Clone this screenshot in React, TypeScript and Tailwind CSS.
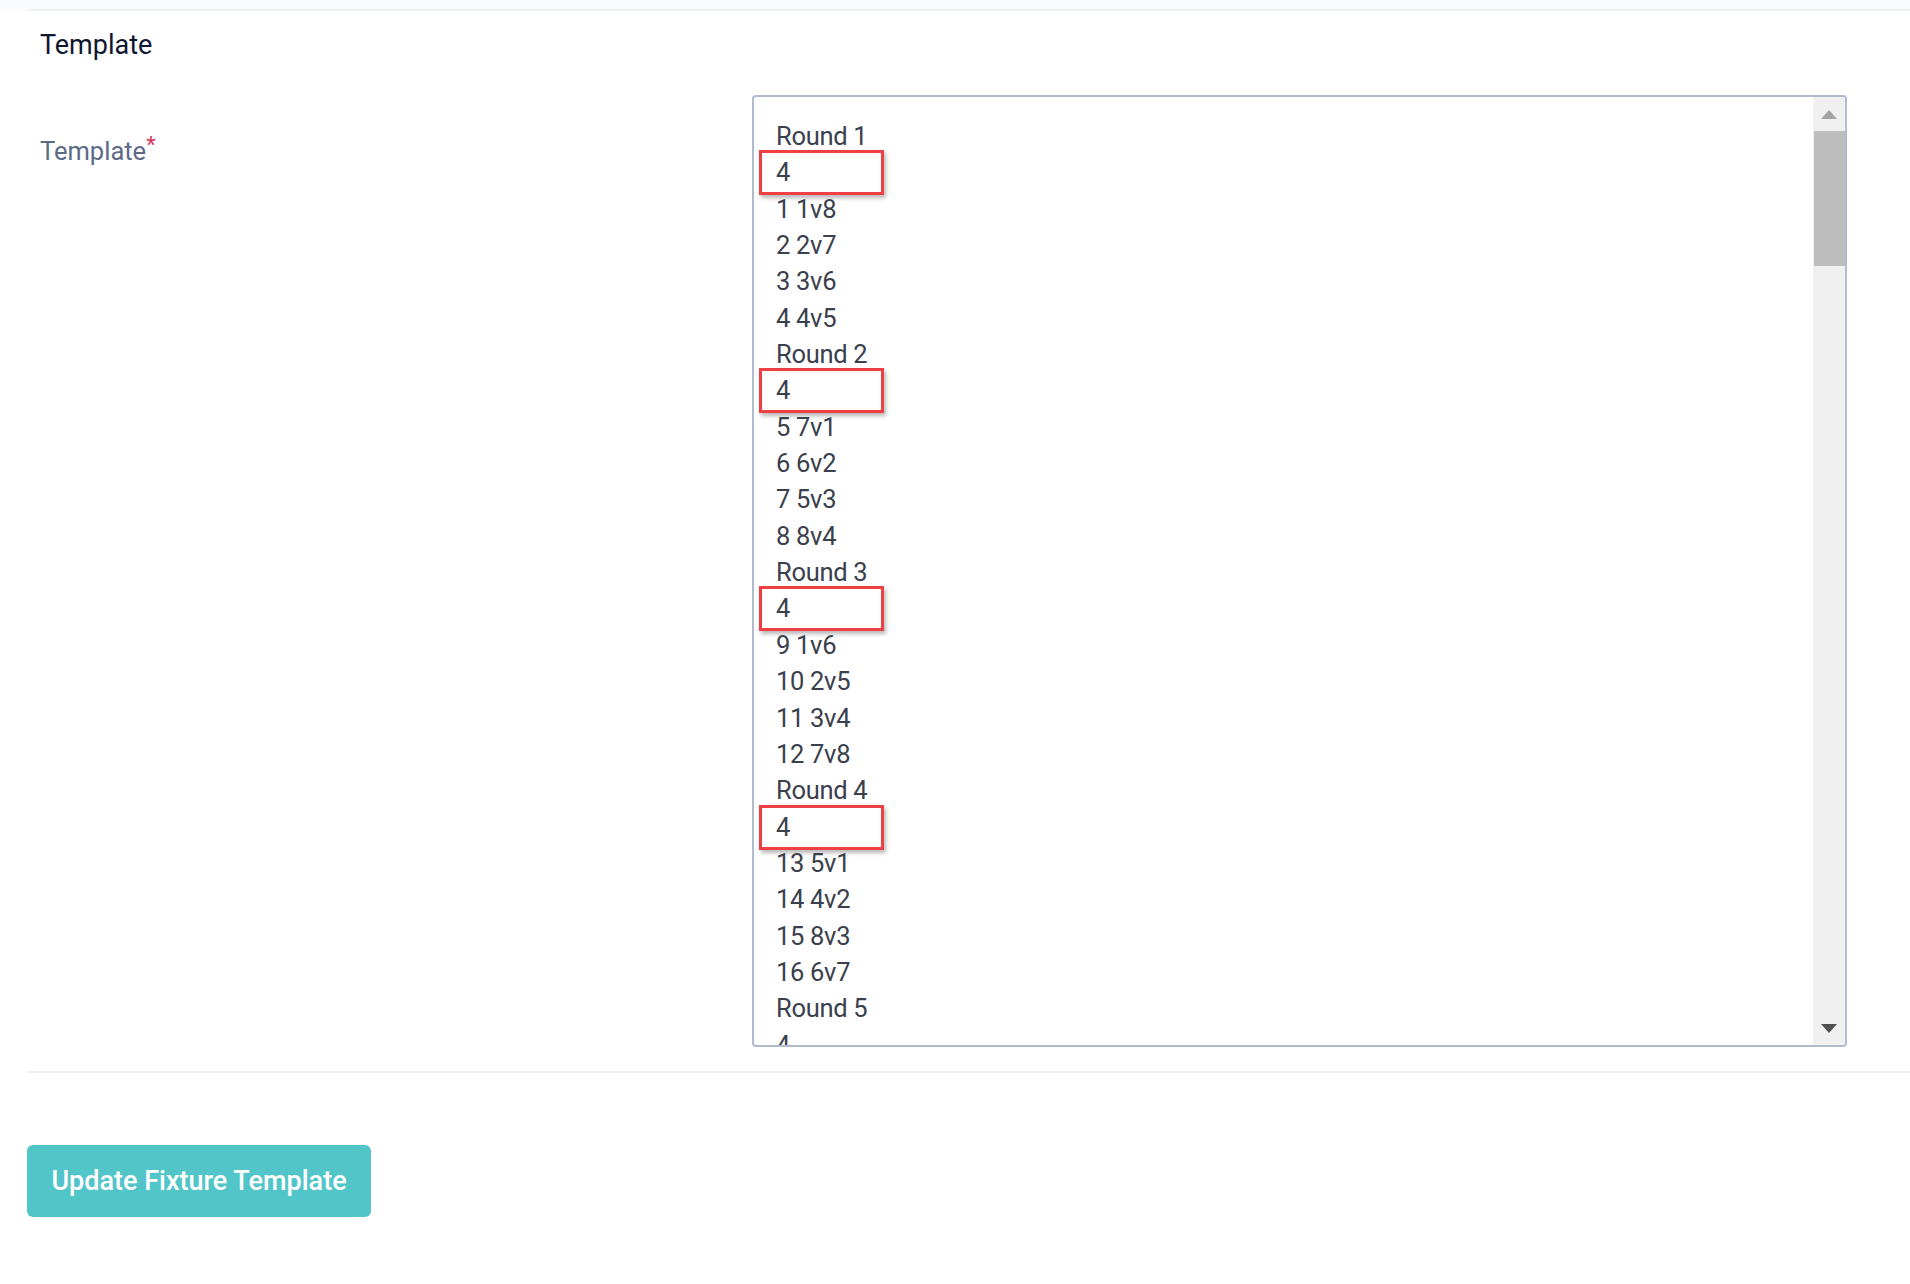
import React from 'react'

const rows: string[] = [
  'Round 1', '4', '1 1v8', '2 2v7', '3 3v6', '4 4v5',
  'Round 2', '4', '5 7v1', '6 6v2', '7 5v3', '8 8v4',
  'Round 3', '4', '9 1v6', '10 2v5', '11 3v4', '12 7v8',
  'Round 4', '4', '13 5v1', '14 4v2', '15 8v3', '16 6v7',
  'Round 5', '4',
]

// rows that carry the red highlight box
const marked = [1, 7, 13, 19]

function Row({ text, mark }: { text: string; mark: boolean }) {
  return (
    <div className="relative h-[36.35px] leading-[36.35px] whitespace-nowrap">
      {text}
      {mark && (
        <span className="absolute -left-[17px] -top-[4px] w-[125px] h-[45px] border-[3px] border-[#ee3f42] shadow-[2px_3px_4px_rgba(0,0,0,0.28)]" />
      )}
    </div>
  )
}

export default function App() {
  return (
    <div className="min-h-screen bg-white font-['Roboto',sans-serif]">
      <div className="h-[9px] bg-[#fafbfc]" />
      <div className="ml-[27px] border-t-2 border-[#edf1f6]">
        <h2 className="mt-[18px] pl-[13px] text-[27px] leading-[32px] font-normal text-[#0e1630]">
          Template
        </h2>

        <div className="mt-[34px] flex">
          <label className="w-[725px] pl-[13px] pt-[38px] text-[25.5px] leading-[36px] text-[#5b6b86]">
            Template
            <span className="relative -top-[8px] text-[22px] text-[#d6365c]">*</span>
          </label>

          <div className="mr-[63px] flex h-[952px] flex-1 overflow-hidden rounded-[4px] border-2 border-[#b0bbce] bg-white">
            <div className="flex-1 overflow-hidden pl-[22px] pt-[21px] text-[25.5px] tracking-[-0.3px] text-[#3a404c]">
              {rows.map((r, i) => (
                <Row key={i} text={r} mark={marked.includes(i)} />
              ))}
            </div>

            <div className="flex w-[32px] flex-col bg-[#f0f0f0]">
              <div className="flex h-[34px] items-center justify-center">
                <svg width="16" height="9" viewBox="0 0 16 9">
                  <polygon points="8,0 16,9 0,9" fill="#a3a3a3" />
                </svg>
              </div>
              <div className="ml-[1px] h-[135px] bg-[#bdbdbd]" />
              <div className="flex-1" />
              <div className="flex h-[34px] items-center justify-center">
                <svg width="16" height="9" viewBox="0 0 16 9">
                  <polygon points="0,0 16,0 8,9" fill="#505050" />
                </svg>
              </div>
            </div>
          </div>
        </div>

        <div className="mt-[24px] border-t-2 border-[#eef2f6]" />

        <button className="mt-[72px] h-[72px] w-[344px] rounded-[6px] bg-[#52c5c9] text-[27px] font-medium text-white">
          Update Fixture Template
        </button>
      </div>
    </div>
  )
}
